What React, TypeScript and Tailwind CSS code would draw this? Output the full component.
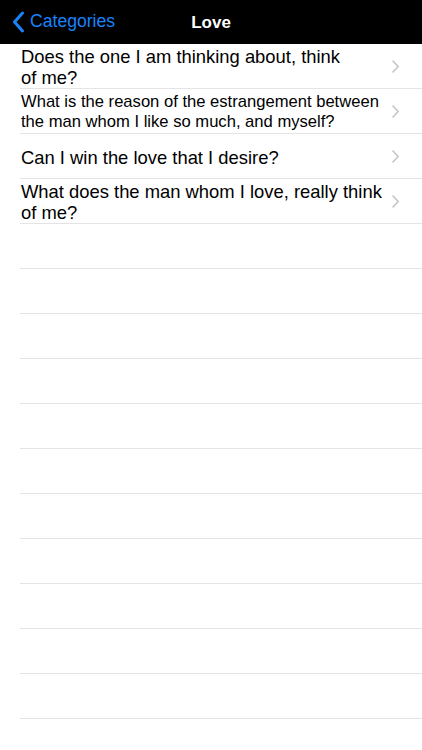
import React from "react";

const questions: { lines: string[]; small?: boolean }[] = [
  { lines: ["Does the one I am thinking about, think", "of me?"] },
  { lines: ["What is the reason of the estrangement between", "the man whom I like so much, and myself?"], small: true },
  { lines: ["Can I win the love that I desire?"] },
  { lines: ["What does the man whom I love, really think", "of me?"] },
];

function Chevron() {
  return (
    <svg width="9" height="15" viewBox="0 0 9 15" className="shrink-0">
      <path d="M2 2 L7.2 7.5 L2 13" fill="none" stroke="#c4c4c8" strokeWidth="1.6" strokeLinecap="round" strokeLinejoin="round" />
    </svg>
  );
}

export default function App() {
  const empty = Array.from({ length: 12 });
  return (
    <div className="w-[422px] h-[750px] bg-white overflow-hidden" style={{ fontFamily: '"Liberation Sans", Arial, sans-serif' }}>
      <div className="relative h-[44px] bg-black flex items-center">
        <div className="flex items-center pl-[12px] gap-[5px]">
          <svg width="13" height="22" viewBox="0 0 13 22">
            <path d="M10.5 2 L2.5 11 L10.5 20" fill="none" stroke="#1a82fb" strokeWidth="3" strokeLinecap="round" strokeLinejoin="round" />
          </svg>
          <span className="text-[17.6px] text-[#1a82fb] leading-none">Categories</span>
        </div>
        <div className="absolute inset-0 flex items-center justify-center pointer-events-none">
          <span className="text-[17px] font-bold text-white leading-none">Love</span>
        </div>
      </div>
      <div className="pl-[20px]">
        {questions.map((q, i) => (
          <div key={i} className="h-[45px] border-b border-[#e4e4e6] flex items-center pr-[22px]">
            <div
              className={
                q.small
                  ? "flex-1 pl-[1px] pt-[1px] text-[16.6px] leading-[20px] text-black"
                  : "flex-1 pl-[1px] pt-[2px] text-[18.4px] leading-[21px] text-black"
              }
            >
              {q.lines.map((line, j) => (
                <div key={j} className="whitespace-nowrap">
                  {line}
                </div>
              ))}
            </div>
            <Chevron />
          </div>
        ))}
        {empty.map((_, i) => (
          <div key={`e${i}`} className="h-[45px] border-b border-[#e4e4e6]" />
        ))}
      </div>
    </div>
  );
}
